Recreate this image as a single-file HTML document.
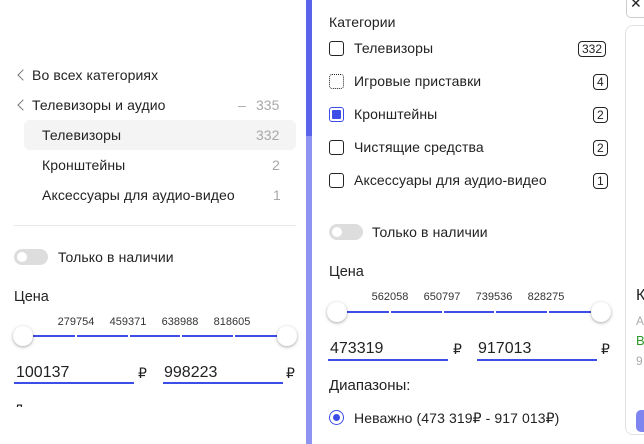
<!DOCTYPE html>
<html><head><meta charset="utf-8"><style>
*{margin:0;padding:0;box-sizing:border-box}
body{width:644px;height:444px;overflow:hidden;background:#fff;font-family:"Liberation Sans","DejaVu Sans",sans-serif;color:#222;position:relative}
.a{position:absolute;white-space:nowrap;line-height:1}
.t14{font-size:14px}
.f{font-size:14px;letter-spacing:0.1px}
.g{color:#a8a8a8}
.chev{position:absolute;width:8px;height:8px;border-left:1.3px solid #777;border-bottom:1.3px solid #777;transform:rotate(45deg)}
.seg{position:absolute;height:2px;background:#3d4de8}
.knob{position:absolute;width:20px;height:20px;border-radius:50%;background:#fff;box-shadow:0 1px 3px rgba(0,0,0,.35)}
.lab{position:absolute;font-size:11px;color:#333;line-height:1;transform:translateX(-50%)}
.ul{position:absolute;height:2px;background:#3d4de8}
.cb{position:absolute;width:15px;height:15px;border:1.3px solid #222;border-radius:3px}
.badge{position:absolute;height:16px;border:1px solid #222;border-radius:4px;font-size:12px;line-height:14px;padding:0 3px;text-align:center}
.tog{position:absolute;width:34px;height:16px;border-radius:8px;background:#ddd}
.tog i{position:absolute;left:3px;top:3px;width:10px;height:10px;border-radius:50%;background:#fff}
</style></head><body>
<div class="chev" style="left:19px;top:71px"></div>
<div class="a f" style="left:32px;top:68px">Во всех категориях</div>
<div class="chev" style="left:19px;top:101px"></div>
<div class="a f" style="left:32px;top:98px">Телевизоры и аудио</div>
<div class="a g t14" style="left:238px;top:98px">–</div>
<div class="a g t14" style="left:256px;top:98px">335</div>
<div class="a" style="left:24px;top:120px;width:272px;height:30px;background:#f4f4f4;border-radius:6px"></div>
<div class="a f" style="left:42px;top:128px">Телевизоры</div>
<div class="a g t14" style="left:256px;top:128px">332</div>
<div class="a f" style="left:42px;top:158px">Кронштейны</div>
<div class="a g t14" style="left:272px;top:158px">2</div>
<div class="a f" style="left:42px;top:188px">Аксессуары для аудио-видео</div>
<div class="a g t14" style="left:273px;top:188px">1</div>
<div class="a" style="left:14px;top:225px;width:282px;height:1px;background:#e8e8e8"></div>
<div class="tog" style="left:14px;top:249px"><i></i></div>
<div class="a f" style="left:58px;top:250px">Только в наличии</div>
<div class="a" style="left:14px;top:290px;font-size:14.5px">Цена</div>
<div class="lab" style="left:76px;top:317px">279754</div>
<div class="lab" style="left:128px;top:317px">459371</div>
<div class="lab" style="left:180px;top:317px">638988</div>
<div class="lab" style="left:232px;top:317px">818605</div>
<div class="seg" style="left:24px;top:335px;width:51px"></div>
<div class="seg" style="left:77px;top:335px;width:51px"></div>
<div class="seg" style="left:130px;top:335px;width:50px"></div>
<div class="seg" style="left:182px;top:335px;width:51px"></div>
<div class="seg" style="left:235px;top:335px;width:52px"></div>
<div class="knob" style="left:13px;top:326px"></div>
<div class="knob" style="left:277px;top:326px"></div>
<div class="a" style="left:16px;top:365px;font-size:16px">100137</div>
<div class="ul" style="left:14px;top:382px;width:120px"></div>
<div class="a t14" style="left:138px;top:366px">₽</div>
<div class="a" style="left:164px;top:365px;font-size:16px">998223</div>
<div class="ul" style="left:163px;top:382px;width:120px"></div>
<div class="a t14" style="left:286px;top:366px">₽</div>
<div class="a t14" style="left:14px;top:402px;height:5px;overflow:hidden">Д</div>

<div class="a" style="left:306px;top:0;width:6px;height:444px;background:#8f94f3"></div>
<div class="a" style="left:306px;top:0;width:6px;height:136px;background:#5b63ea"></div>

<div class="a f" style="left:329px;top:15px">Категории</div>
<div class="cb" style="left:329px;top:41px"></div>
<div class="a f" style="left:354px;top:41px">Телевизоры</div>
<div class="badge" style="left:578px;top:41px">332</div>
<div class="cb" style="left:329px;top:74px;border-style:dotted"></div>
<div class="a f" style="left:354px;top:74px">Игровые приставки</div>
<div class="badge" style="left:593px;top:74px">4</div>
<div class="cb" style="left:329px;top:107px;border-color:#3d4de8;padding:2px"><div style="width:9px;height:9px;background:#3d4de8;border-radius:1px"></div></div>
<div class="a f" style="left:354px;top:107px">Кронштейны</div>
<div class="badge" style="left:593px;top:107px">2</div>
<div class="cb" style="left:329px;top:140px"></div>
<div class="a f" style="left:354px;top:140px">Чистящие средства</div>
<div class="badge" style="left:593px;top:140px">2</div>
<div class="cb" style="left:329px;top:173px"></div>
<div class="a f" style="left:354px;top:173px">Аксессуары для аудио-видео</div>
<div class="badge" style="left:593px;top:173px">1</div>
<div class="tog" style="left:329px;top:224px"><i></i></div>
<div class="a f" style="left:372px;top:225px">Только в наличии</div>
<div class="a" style="left:329px;top:265px;font-size:14.5px">Цена</div>
<div class="lab" style="left:390px;top:292px">562058</div>
<div class="lab" style="left:442px;top:292px">650797</div>
<div class="lab" style="left:494px;top:292px">739536</div>
<div class="lab" style="left:546px;top:292px">828275</div>
<div class="seg" style="left:340px;top:311px;width:49px"></div>
<div class="seg" style="left:391px;top:311px;width:51px"></div>
<div class="seg" style="left:444px;top:311px;width:50px"></div>
<div class="seg" style="left:496px;top:311px;width:51px"></div>
<div class="seg" style="left:549px;top:311px;width:50px"></div>
<div class="knob" style="left:327px;top:302px"></div>
<div class="knob" style="left:591px;top:302px"></div>
<div class="a" style="left:330px;top:341px;font-size:16px">473319</div>
<div class="ul" style="left:328px;top:359px;width:120px"></div>
<div class="a t14" style="left:453px;top:342px">₽</div>
<div class="a" style="left:478px;top:341px;font-size:16px">917013</div>
<div class="ul" style="left:477px;top:359px;width:120px"></div>
<div class="a t14" style="left:601px;top:342px">₽</div>
<div class="a" style="left:329px;top:378px;font-size:15px">Диапазоны:</div>
<div class="a" style="left:329px;top:410px;width:15px;height:15px;border:1.5px solid #3d4de8;border-radius:50%"><div style="margin:2.5px;width:7px;height:7px;border-radius:50%;background:#3d4de8"></div></div>
<div class="a f" style="left:354px;top:411px">Неважно (473 319₽ - 917 013₽)</div>

<div class="a" style="left:626px;top:-6px;width:30px;height:24px;border:1px solid #ccc;border-radius:5px"></div>
<div class="a" style="left:630px;top:-4px;font-size:14px">✕</div>
<div class="a" style="left:625px;top:25px;width:30px;height:410px;border:1px solid #e2e2e2;border-radius:8px;border-right:none"></div>
<div class="a" style="left:636px;top:288px;font-size:16px">К</div>
<div class="a" style="left:636px;top:315px;font-size:12px;color:#aaa">А</div>
<div class="a" style="left:636px;top:334px;font-size:13px;color:#2a9a2a">В</div>
<div class="a" style="left:636px;top:355px;font-size:12px;color:#aaa">9</div>
<div class="a" style="left:636px;top:410px;width:20px;height:22px;background:#7f85f0;border-radius:5px 0 0 5px"></div>
</body></html>
